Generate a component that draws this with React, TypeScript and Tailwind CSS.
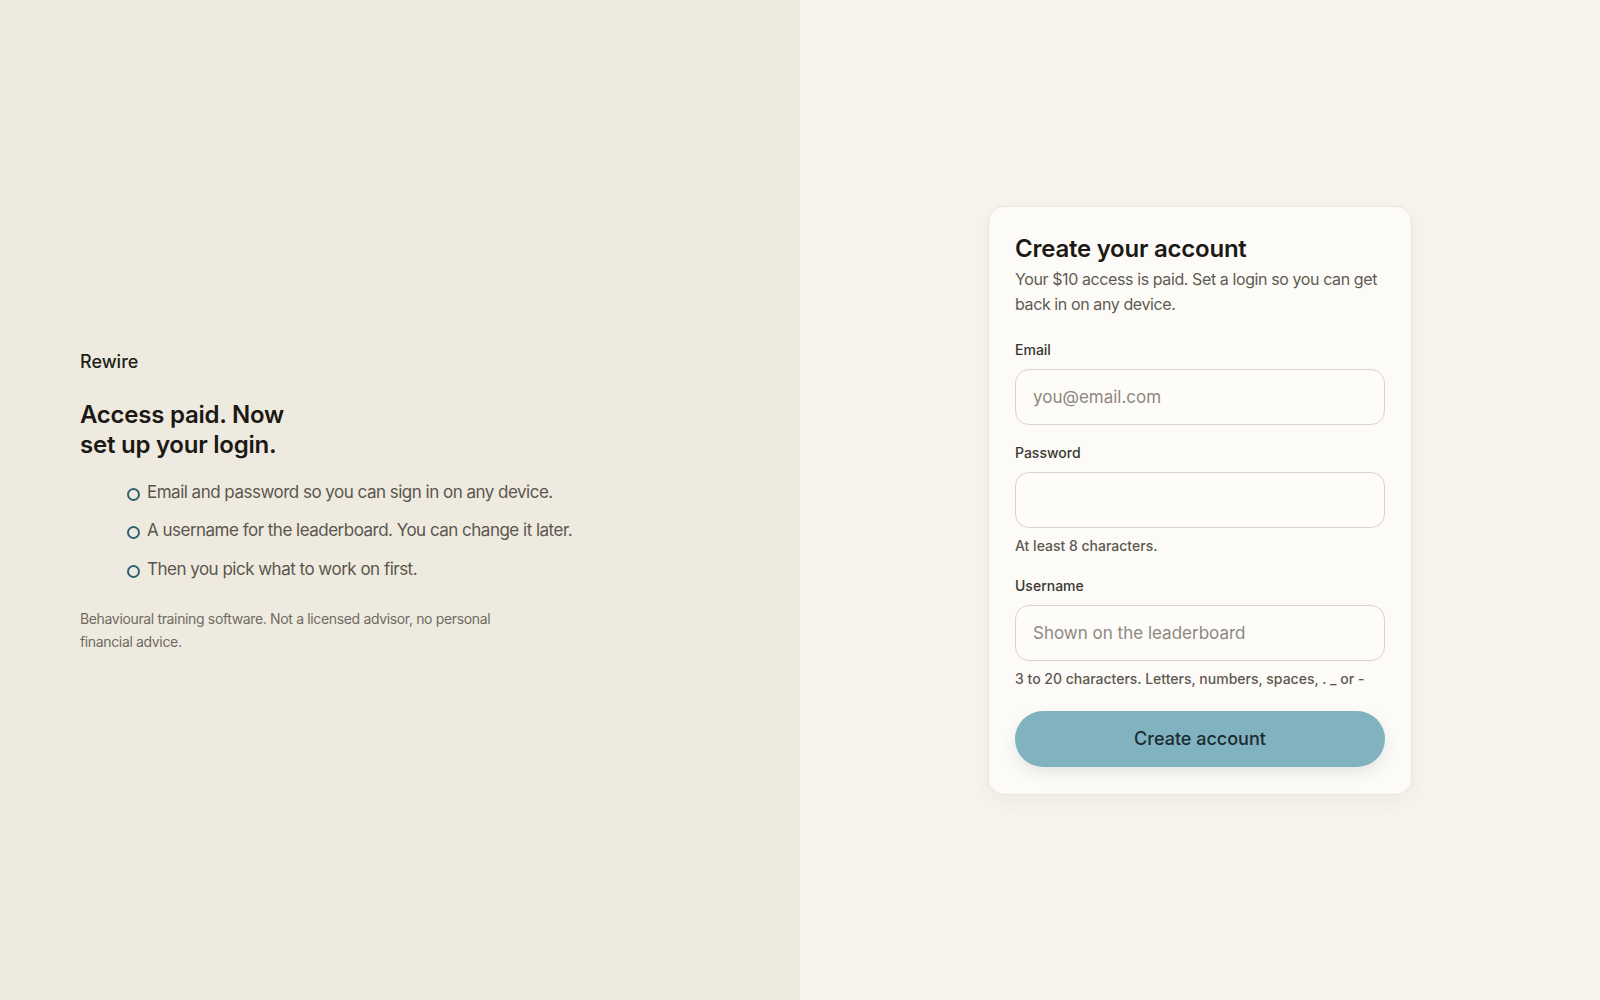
import { useState } from "react";

// サインアップ（支払い後のアカウント作成）画面
const steps = [
  "Email and password so you can sign in on any device.",
  "A username for the leaderboard. You can change it later.",
  "Then you pick what to work on first.",
];

function Field({
  label,
  type,
  placeholder,
  hint,
  className,
}: {
  label: string;
  type: string;
  placeholder?: string;
  hint?: string;
  className?: string;
}) {
  const [value, setValue] = useState("");
  return (
    <div className={className}>
      <label className="block text-[14px] leading-[20px] font-medium text-[#3a3731] mb-[9px]">
        {label}
      </label>
      <input
        type={type}
        value={value}
        onChange={(e) => setValue(e.target.value)}
        placeholder={placeholder}
        className="block w-full h-[56px] rounded-[14px] border border-[#dad5c8] bg-[#fdfcf9] px-[17px] text-[17px] text-[#2a2722] placeholder:text-[#8c887f] outline-none"
      />
      {hint && (
        <p className="mt-2 text-[14px] leading-[20px] font-medium text-[#5c5850]">{hint}</p>
      )}
    </div>
  );
}

export default function App() {
  return (
    <div className="flex h-[1000px] w-full font-['Inter',sans-serif] text-[#1f1c17]">
      {/* 左パネル */}
      <div className="flex w-1/2 flex-col justify-center bg-[#efeae0] px-[80px]">
        <div className="text-[18px] leading-[26px] font-medium text-[#221f1a] mt-[2px]">Rewire</div>
        <h1 className="mt-[25px] text-[24px] leading-[30px] font-semibold tracking-[-0.01em] text-[#1c1915]">
          Access paid. Now
          <br />
          set up your login.
        </h1>
        <ul className="mt-[18px] flex flex-col gap-[10px] pl-[47px]">
          {steps.map((s) => (
            <li key={s} className="flex items-center gap-[7px] text-[17px] leading-[28.5px] tracking-[-0.03em] text-[#5a564e]">
              <span className="mt-[4px] h-[13px] w-[13px] shrink-0 rounded-full border-2 border-[#2f6371]" />
              <span>{s}</span>
            </li>
          ))}
        </ul>
        <p className="mt-[25px] max-w-[430px] text-[14px] leading-[22.5px] tracking-[-0.025em] text-[#6e6a62]">
          Behavioural training software. Not a licensed advisor, no personal financial advice.
        </p>
      </div>

      {/* 右パネル */}
      <div className="flex w-1/2 items-center justify-center bg-[#f7f4ee]">
        <div className="w-[424px] rounded-2xl border border-[#ebe6dc] bg-[#fcfbf7] px-[26px] pt-[27px] pb-[27px] shadow-[0_6px_20px_rgba(60,50,30,0.06)]">
          <h2 className="text-[24px] leading-[30px] font-semibold tracking-[-0.01em] text-[#1c1915]">
            Create your account
          </h2>
          <p className="mt-[3px] text-[16px] leading-[25.5px] tracking-[-0.025em] text-[#5f5b53]">
            Your $10 access is paid. Set a login so you can get back in on any device.
          </p>

          <Field className="mt-[22px]" label="Email" type="email" placeholder="you@email.com" />
          <Field className="mt-[18px]" label="Password" type="password" hint="At least 8 characters." />
          <Field
            className="mt-[20px]"
            label="Username"
            type="text"
            placeholder="Shown on the leaderboard"
            hint="3 to 20 characters. Letters, numbers, spaces, . _ or -"
          />

          <button className="mt-[22px] h-[56px] w-full rounded-full bg-[#80b2bf] text-[18px] font-medium text-[#1b2a2f] shadow-[0_6px_14px_rgba(60,80,90,0.12)]">
            Create account
          </button>
        </div>
      </div>
    </div>
  );
}
